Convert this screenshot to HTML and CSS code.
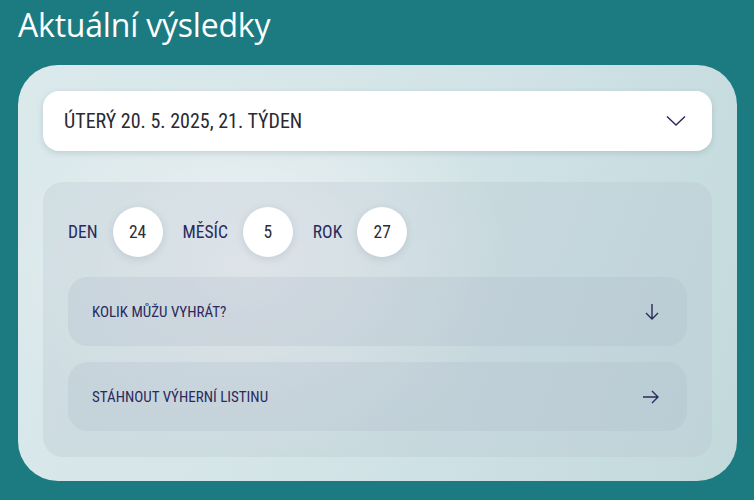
FILE: index.html
```html
<html>
<head>
<title>Aktuální výsledky</title>
<link rel="stylesheet" href="styles.css">
</head>
<body>

<h1 class="title">Aktuální výsledky</h1>

<div class="card">
	<div class="select">
		<span>ÚTERÝ 20. 5. 2025, 21. TÝDEN</span>
		<svg width="20" height="12" viewBox="0 0 20 12"><path d="M1 1.5 L10 10 L19 1.5" fill="none" stroke="#2b2a5c" stroke-width="1.5"/></svg>
	</div>

	<div class="panel">
		<div class="draw">
			<span class="lbl">DEN</span><span class="ball">24</span>
			<span class="lbl">MĚSÍC</span><span class="ball">5</span>
			<span class="lbl">ROK</span><span class="ball">27</span>
		</div>

		<div class="btn">
			<span>KOLIK MŮŽU VYHRÁT?</span>
			<svg width="16" height="18" viewBox="0 0 16 18"><path d="M8 1 V16 M2 10 L8 16 L14 10" fill="none" stroke="#2b2a5c" stroke-width="1.4"/></svg>
		</div>
		<div class="btn">
			<span>STÁHNOUT VÝHERNÍ LISTINU</span>
			<svg width="18" height="16" viewBox="0 0 18 16"><path d="M1 8 H16 M10 2 L16 8 L10 14" fill="none" stroke="#2b2a5c" stroke-width="1.4"/></svg>
		</div>
	</div>
</div>

</body>
</html>
```

FILE: styles.css
```css
body {margin: 0; padding: 0 17px 0 18px; background: #1b7b80; font-family: "Roboto Condensed", Roboto, sans-serif;}
.title {margin: 0; padding: 5px 0 0 0; height: 65px; box-sizing: border-box; font-family: "Open Sans", sans-serif; font-weight: 400; font-size: 32px; line-height: 40px; color: #fff; letter-spacing: -0.2px;}
.card {border-radius: 40px; padding: 26px 25px 24px 25px; background: radial-gradient(ellipse 260px 200px at 230px 200px, #eef1f4 0%, rgba(238,241,244,0) 100%), linear-gradient(110deg, #dbe9eb 0%, #d3e4e7 50%, #c2d9dc 100%);}
.select {height: 60px; box-sizing: border-box; background: #fff; border-radius: 16px; box-shadow: 0 2px 6px rgba(60,90,100,0.18); display: flex; align-items: center; justify-content: space-between; padding: 0 26px 0 21px; font-size: 20px; color: #2a2a30;}
.panel {margin-top: 31px; border-radius: 20px; background: rgba(180,195,205,0.28); padding: 25px 25px 26px 25px;}
.draw {display: flex; align-items: center; height: 50px; margin-bottom: 20px; font-size: 17.5px;}
.lbl {color: #2b2a5c; margin-right: 15px;}
.ball {width: 50px; height: 50px; border-radius: 50%; background: #fff; display: flex; align-items: center; justify-content: center; color: #2e2e33; box-shadow: 0 2px 8px rgba(60,80,100,0.15); margin-right: 20px;}
.btn {height: 69px; box-sizing: border-box; border-radius: 20px; background: rgba(170,185,198,0.25); display: flex; align-items: center; justify-content: space-between; padding: 0 27px 0 24px; font-size: 15px; color: #2b2a5c; margin-bottom: 16px;}
.btn:last-child {margin-bottom: 0;}
```
